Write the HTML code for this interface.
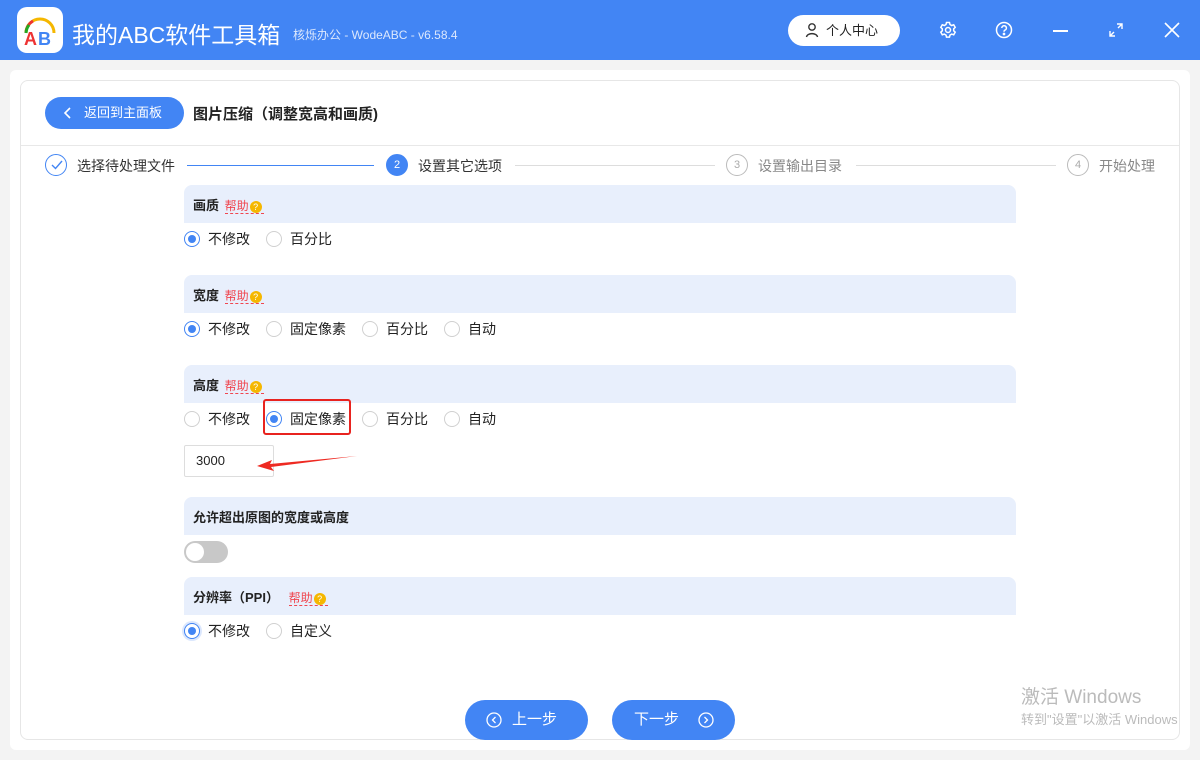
<!DOCTYPE html>
<html><head><meta charset="utf-8"><style>
*{margin:0;padding:0;box-sizing:border-box}
body{width:1200px;height:760px;overflow:hidden;background:#f3f3f3;font-family:"Liberation Sans","Noto Sans CJK SC",sans-serif;color:#222;position:relative}
.a{position:absolute}
.hdr{left:0;top:0;width:1200px;height:60px;background:#4285f4}
.sec{position:absolute;left:184px;width:832px;height:38px;background:#e8effc;border-radius:8px 8px 0 0;font-size:13px;font-weight:bold;padding:10px 9px;color:#222}
.help{color:#f0464f;font-weight:normal;border-bottom:1px dashed #f0464f;margin-left:2px;padding-right:2px;font-size:12px}
.q{display:inline-block;width:12px;height:12px;border-radius:50%;background:#f5b700;color:#fff;font-size:9px;text-align:center;line-height:12px;vertical-align:0;margin-left:1px}
.row{position:absolute;left:184px;font-size:14px;height:18px;display:flex;align-items:center}
.r{display:inline-block;width:16px;height:16px;border-radius:50%;border:1px solid #d0d0d0;background:#fff;margin-right:8px;position:relative}
.r.on{border-color:#4285f4}
.r.on:after{content:"";position:absolute;left:3px;top:3px;width:8px;height:8px;border-radius:50%;background:#4285f4}
.row span.t{margin-right:16px}
.stp{position:absolute;top:154px;width:22px;height:22px;border-radius:50%;border:1px solid #bbb;font-size:11px;color:#aaa;text-align:center;line-height:20px}
.sl{position:absolute;top:165px;height:1px;background:#ddd}
.st{position:absolute;top:156px;font-size:14px;color:#333}
.btn{position:absolute;top:700px;height:40px;width:123px;border-radius:20px;background:#4285f4;color:#fff;font-size:15px;line-height:40px}
</style></head><body>
<div class="a hdr"></div>
<div class="a" style="left:17px;top:7px;width:46px;height:46px;background:#fff;border-radius:10px">
<svg width="46" height="46" viewBox="0 0 46 46"><path d="M9 26 A14 14 0 0 1 37 26" fill="none" stroke="#f5b700" stroke-width="3"/><path d="M9 26 A14 14 0 0 1 16 14" fill="none" stroke="#e33" stroke-width="3"/><path d="M9 26 A14 14 0 0 1 12 18" fill="none" stroke="#2a2" stroke-width="3"/>
<text x="7" y="38" font-size="18" font-weight="bold" fill="#e33" font-family="Liberation Sans">A</text><text x="21" y="38" font-size="18" font-weight="bold" fill="#4285f4" font-family="Liberation Sans">B</text></svg></div>
<div class="a" style="left:72px;top:16px;font-size:23px;color:#fff">我的ABC软件工具箱</div>
<div class="a" style="left:293px;top:26px;font-size:12px;color:#dce8fd">核烁办公 - WodeABC - v6.58.4</div>
<div class="a" style="left:788px;top:15px;width:112px;height:31px;background:#fff;border-radius:16px;font-size:13px;line-height:31px;padding-left:38px;color:#222">个人中心</div>
<svg class="a" style="left:804px;top:22px" width="16" height="16" viewBox="0 0 16 16" fill="none" stroke="#333" stroke-width="1.4"><circle cx="8" cy="5" r="3.2"/><path d="M2.5 15 C3 10.5 13 10.5 13.5 15"/></svg>
<svg class="a" style="left:938px;top:20px" width="20" height="20" viewBox="0 0 20 20" fill="none" stroke="#fff" stroke-width="1.5"><circle cx="10" cy="10" r="2.5"/><path d="M8.5 2.5h3l.5 2 1.7 1 2-.7 1.5 2.6-1.5 1.4v2l1.5 1.4-1.5 2.6-2-.7-1.7 1-.5 2h-3l-.5-2-1.7-1-2 .7-1.5-2.6 1.5-1.4v-2L2.8 7.4l1.5-2.6 2 .7 1.7-1z"/></svg>
<svg class="a" style="left:994px;top:20px" width="20" height="20" viewBox="0 0 20 20" fill="none" stroke="#fff" stroke-width="1.5"><circle cx="10" cy="10" r="7.5"/><path d="M7.8 8a2.3 2.3 0 1 1 3 2.2c-.6.3-.8.7-.8 1.5"/><circle cx="10" cy="14" r=".6" fill="#fff"/></svg>
<div class="a" style="left:1053px;top:30px;width:15px;height:2px;background:#fff"></div>
<svg class="a" style="left:1109px;top:23px" width="14" height="14" viewBox="0 0 14 14" fill="none" stroke="#fff" stroke-width="1.4"><path d="M8 1h5v5M13 1L9 5M6 13H1V8M1 13l4-4"/></svg>
<svg class="a" style="left:1164px;top:22px" width="16" height="16" viewBox="0 0 16 16" stroke="#fff" stroke-width="1.6"><path d="M1 1L15 15M15 1L1 15"/></svg>
<div class="a" style="left:10px;top:70px;width:1180px;height:680px;background:#fff;border-radius:6px"></div>
<div class="a" style="left:20px;top:80px;width:1160px;height:660px;border:1px solid #e6e6e6;border-radius:8px"></div>
<div class="a" style="left:45px;top:97px;width:139px;height:32px;background:#4285f4;border-radius:16px;color:#fff;font-size:13px;line-height:32px;padding-left:39px">返回到主面板</div>
<svg class="a" style="left:63px;top:106px" width="10" height="14" viewBox="0 0 10 14" fill="none" stroke="#fff" stroke-width="1.6"><path d="M7 2L2 7l5 5"/></svg>
<div class="a" style="left:193px;top:103px;font-size:15px;font-weight:bold;color:#222">图片压缩（调整宽高和画质)</div>
<div class="a" style="left:21px;top:145px;width:1158px;height:1px;background:#e8e8e8"></div>
<div class="stp" style="left:45px;border-color:#4285f4"></div>
<svg class="a" style="left:50px;top:159px" width="14" height="12" viewBox="0 0 14 12" fill="none" stroke="#4285f4" stroke-width="1.4"><path d="M2 6l3.5 3.5L12 2"/></svg>
<div class="st" style="left:77px">选择待处理文件</div>
<div class="sl" style="left:187px;width:187px;background:#4285f4"></div>
<div class="stp" style="left:386px;background:#4285f4;border-color:#4285f4;color:#fff">2</div>
<div class="st" style="left:418px">设置其它选项</div>
<div class="sl" style="left:515px;width:200px"></div>
<div class="stp" style="left:726px">3</div>
<div class="st" style="left:758px;color:#888">设置输出目录</div>
<div class="sl" style="left:856px;width:200px"></div>
<div class="stp" style="left:1067px">4</div>
<div class="st" style="left:1099px;color:#888">开始处理</div>

<div class="sec" style="top:185px">画质 <span class="help">帮助<span class="q">?</span></span></div>
<div class="row" style="top:230px"><i class="r on"></i><span class="t">不修改</span><i class="r"></i><span class="t">百分比</span></div>
<div class="sec" style="top:275px">宽度 <span class="help">帮助<span class="q">?</span></span></div>
<div class="row" style="top:320px"><i class="r on"></i><span class="t">不修改</span><i class="r"></i><span class="t">固定像素</span><i class="r"></i><span class="t">百分比</span><i class="r"></i><span class="t">自动</span></div>
<div class="sec" style="top:365px">高度 <span class="help">帮助<span class="q">?</span></span></div>
<div class="row" style="top:410px"><i class="r"></i><span class="t">不修改</span><i class="r on"></i><span class="t">固定像素</span><i class="r"></i><span class="t">百分比</span><i class="r"></i><span class="t">自动</span></div>
<div class="a" style="left:263px;top:399px;width:88px;height:36px;border:2px solid #e8231f;border-radius:3px"></div>
<div class="a" style="left:184px;top:445px;width:90px;height:32px;border:1px solid #ddd;border-radius:2px;font-size:13px;line-height:30px;padding-left:11px">3000</div>
<svg class="a" style="left:250px;top:450px" width="112" height="24" viewBox="0 0 112 24"><path d="M107 6 L20 14 L22 10 L7 16 L24 21 L21 17 Z" fill="#ee2a22"/></svg>
<div class="sec" style="top:497px">允许超出原图的宽度或高度</div>
<div class="a" style="left:184px;top:541px;width:44px;height:22px;border-radius:11px;background:#c8c8c8"></div>
<div class="a" style="left:186px;top:543px;width:18px;height:18px;border-radius:50%;background:#fff"></div>
<div class="sec" style="top:577px">分辨率（PPI） <span class="help" style="margin-left:6px">帮助<span class="q">?</span></span></div>
<div class="row" style="top:622px"><i class="r on" style="box-shadow:0 0 0 2px #dbe7fd"></i><span class="t">不修改</span><i class="r"></i><span class="t">自定义</span></div>

<div class="btn" style="left:465px;padding-left:47px">上一步</div>
<svg class="a" style="left:486px;top:712px" width="16" height="16" viewBox="0 0 16 16" fill="none" stroke="#fff" stroke-width="1.3"><circle cx="8" cy="8" r="7"/><path d="M9.5 5L6.5 8l3 3"/></svg>
<div class="btn" style="left:612px;padding-left:22px">下一步</div>
<svg class="a" style="left:698px;top:712px" width="16" height="16" viewBox="0 0 16 16" fill="none" stroke="#fff" stroke-width="1.3"><circle cx="8" cy="8" r="7"/><path d="M6.5 5l3 3-3 3"/></svg>
<div class="a" style="left:1021px;top:682px;font-size:19px;color:#bbb">激活 Windows</div>
<div class="a" style="left:1021px;top:709px;font-size:13px;color:#bbb;white-space:nowrap">转到"设置"以激活 Windows</div>
</body></html>
